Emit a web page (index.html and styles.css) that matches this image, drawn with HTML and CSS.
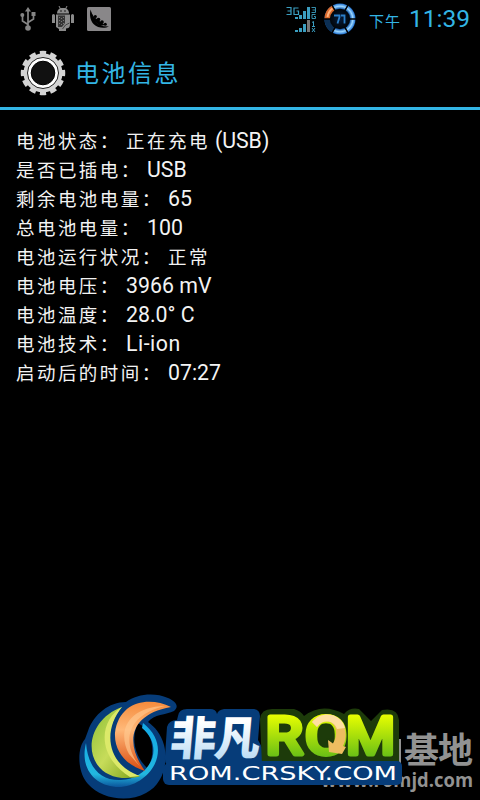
FILE: index.html
```html
<!DOCTYPE html>
<html lang="zh-CN">
<head>
    <meta charset="UTF-8">
    <meta name="viewport" content="width=device-width, initial-scale=1.0">
    <title>电池信息</title>
    <link rel="stylesheet" href="styles.css">
</head>
<body>
    <div class="screen">
        <!-- Status bar -->
        <div class="status-bar">
            <div class="notifications">
                <svg class="usb" width="18" height="24" viewBox="0 0 18 24" fill="none" stroke="#858585" stroke-width="1.7">
                    <path d="M9 20V3M9 17.5L3.5 14V9M9 15.5L14.5 12V7"/>
                    <path d="M9 0L12 4.5H6Z" fill="#858585" stroke="none"/>
                    <circle cx="9" cy="21" r="2.8" fill="#858585" stroke="none"/>
                    <circle cx="3.3" cy="8" r="2" fill="#858585" stroke="none"/>
                    <path d="M12.5 5h4v4h-4z" fill="#858585" stroke="none"/>
                </svg>
                <svg class="robot" width="22" height="26" viewBox="0 0 22 26" fill="#8a8a8a">
                    <path d="M5 7.500C5 4 7 2 11 2S17 4 17 7.500Z"/>
                    <path d="M7 0l1.500 3M15 0l-1.500 3" stroke="#8a8a8a"/>
                    <path d="M0 9.500a1.500 1.500 0 0 1 3 0V17H0ZM19 9.500a1.500 1.500 0 0 1 3 0V17h-3Z"/>
                    <path d="M4 8.500h14v10c0 3-2 4-4 4V25H7v-2L4 21Z"/>
                    <path d="M6 9.500H13V17l-3 4H6Z" fill="#353535"/>
                    <path d="M7.500 11v9M9.500 12v8M11.500 11v7" stroke="#777" stroke-dasharray="1 2"/>
                    <path d="M17.500 17l-4 2-3 4" fill="none" stroke="#333" stroke-width=".8"/>
                    <circle cx="9" cy="5" r=".8" fill="#111"/>
                    <circle cx="13" cy="5" r=".8" fill="#111"/>
                </svg>
                <svg class="pea" width="24" height="24" viewBox="0 0 24 24">
                    <rect width="24" height="24" rx="1.500" fill="#898789"/>
                    <path d="M3.500 2.500C2.500 8 3 13 6.500 17C11 21.500 18 21.500 22 19.500L17 19.300C10 18 6 13 5 7Z"/>
                    <path d="M4 5L7 10L18 18L13 19L6 13Z"/>
                    <circle cx="8.300" cy="9.500" r="1.600"/>
                    <circle cx="11.500" cy="12.500" r="1.800"/>
                    <circle cx="15" cy="15" r="1.800"/>
                    <circle cx="18.300" cy="17.200" r="1.500"/>
                </svg>
            </div>
            <div class="system">
                <svg class="signal" width="30" height="28" viewBox="0 0 30 28" fill="#3b9ec0">
                    <path d="M9 12h3v2H9zM13 10h3v4h-3zM17 6h3v8h-3zM21 2h3v12h-3z"/>
                    <path d="M9 25h3v2H9zM13 23h3v4h-3zM17 19h3v8h-3z"/>
                    <path d="M21 15h3v12h-3z" fill="#777"/>
                    <path d="M.5 2.500H5V9.500H.5M1.500 6H5M12.500 3H8V9.500H12.500V6H10.500" fill="none" stroke="#3b9ec0" stroke-width="1.200"/>
                    <path d="M25.500 2.500H29.500V7.500H25.500M26.500 5H29.500M29.500 9.500H26V13.500H29.500V11.500H28" fill="none" stroke="#3b9ec0" stroke-width=".9"/>
                    <path d="M26 17.500l1.500-1V21M26 21.500h3M26 23l3 4M29 23l-3 4" fill="none" stroke="#3b9ec0"/>
                </svg>
                <svg class="battery" width="32" height="32" viewBox="0 0 32 32">
                    <defs>
                        <radialGradient id="ring">
                            <stop offset=".66" stop-color="#1459ab"/>
                            <stop offset=".82" stop-color="#9bd6ff"/>
                            <stop offset="1" stop-color="#1d6fd0"/>
                        </radialGradient>
                        <radialGradient id="core">
                            <stop offset="0" stop-color="#061b3a"/>
                            <stop offset="1" stop-color="#010509"/>
                        </radialGradient>
                    </defs>
                    <circle cx="16" cy="16" r="15.500" fill="url(#ring)"/>
                    <path d="M16 16L.5 16A15.500 15.500 0 0 1 8.200 2.600Z" fill="#d8682a"/>
                    <path d="M3.500 14A13 13 0 0 1 8.500 5.500" fill="none" stroke="#ffb27d" stroke-width="2"/>
                    <path d="M16 16L.5 16A15.500 15.500 0 0 0 8.200 29.400Z" fill="#0c2f54"/>
                    <path d="M0 16h32M8 2.200l16 27.600M24 2.200L8 29.800" stroke="#000" stroke-width="1.500"/>
                    <circle cx="16" cy="16" r="10.200" fill="url(#core)"/>
                    <path d="M10 12.500h5.500v1.500l-2 6.500M17 12.500h3.500v8" fill="none" stroke="#2b7fc9" stroke-width="1.800"/>
                </svg>
                <span class="ampm">下午</span>
                <span class="clock">11:39</span>
            </div>
        </div>

        <!-- Title bar -->
        <div class="title-bar">
            <svg class="gear" width="46" height="46" viewBox="-23 -23 46 46">
                <circle r="19.500" fill="#d4d4d4"/>
                <circle r="20" fill="none" stroke="#d4d4d4" stroke-width="4.500" pathLength="120" stroke-dasharray="6 4" stroke-dashoffset="3"/>
                <circle r="15.500" fill="#fff" stroke="#222" stroke-width="1"/>
                <circle r="11.800" fill="#111" stroke="#000"/>
            </svg>
            <h1>电池信息</h1>
        </div>

        <!-- Battery details -->
        <ul class="info">
            <li><span class="label">电池状态：</span> <span class="label">正在充电</span><span class="tail">(USB)</span></li>
            <li><span class="label">是否已插电：</span> USB</li>
            <li><span class="label">剩余电池电量：</span> 65</li>
            <li><span class="label">总电池电量：</span> 100</li>
            <li><span class="label">电池运行状况：</span> <span class="label">正常</span></li>
            <li><span class="label">电池电压：</span> 3966 mV</li>
            <li><span class="label">电池温度：</span> 28.0° C</li>
            <li><span class="label">电池技术：</span> <span class="type">Li-ion</span></li>
            <li><span class="label">启动后的时间：</span> 07:27</li>
        </ul>

        <!-- Site logos -->
        <svg class="logos" width="410" height="110" viewBox="70 690 410 110">
            <defs>
                <linearGradient id="green" gradientUnits="userSpaceOnUse" x1="0" y1="714" x2="0" y2="758">
                    <stop offset="0" stop-color="#eaff00"/>
                    <stop offset="1" stop-color="#65bd16"/>
                </linearGradient>
                <linearGradient id="ice" x1="0" y1="0" x2="0" y2="1">
                    <stop offset=".3" stop-color="#fff"/>
                    <stop offset="1" stop-color="#acd5f3"/>
                </linearGradient>
                <linearGradient id="leaf" x1="0" y1="0" x2="1" y2="1">
                    <stop offset="0" stop-color="#8bbf35"/>
                    <stop offset=".5" stop-color="#c7dc5a"/>
                    <stop offset="1" stop-color="#799e16"/>
                </linearGradient>
                <linearGradient id="orange" x1="0" y1="0" x2="0" y2="1">
                    <stop offset="0" stop-color="#f58b3c"/>
                    <stop offset=".4" stop-color="#ffb878"/>
                    <stop offset="1" stop-color="#d94c10"/>
                </linearGradient>
                <linearGradient id="water" x1="0" y1="0" x2="0" y2="1">
                    <stop offset="0" stop-color="#12a8e5"/>
                    <stop offset=".8" stop-color="#22b7df"/>
                    <stop offset="1" stop-color="#0b549b"/>
                </linearGradient>
            </defs>

            <g class="watermark">
                <path d="M396 739h5v24h-5z"/>
                <text x="404" y="762.500" font-size="35" textLength="69">基地</text>
                <text x="321" y="787" font-size="19.500" textLength="152" lengthAdjust="spacingAndGlyphs">www.romjd.com</text>
            </g>

            <!-- Swirl -->
            <path d="M85 739C77 748 77 772 88 784C101 799 128 803 146 793C162 785 169 764 164 745C161 734 155 727 148 722C154 714 166 715 174 711C180 706 175 701 168 698C154 692 137 694 126 702C109 702 94 714 88 731Z" fill="#063c79"/>
            <path d="M138 723C154 731 156 758 147 768C134 755 131 738 138 723Z" fill="#000"/>
            <path d="M86 743C79 771 98 788 121 787C152 784 174 747 143 723L142 728C166 748 149 779 121 780C101 781 88 768 86 743Z" fill="url(#water)"/>
            <path d="M122 707C81 722 82 774 122 778C133 778 140 777 140 776C106 768 101 730 122 707Z" fill="url(#leaf)"/>
            <path d="M122 707C101 719 94 754 130 777L140 776C106 764 103 730 122 707Z" fill="#dce969"/>
            <path d="M171 707C149 696 119 701 115 733C114 753 128 766 145 771C126 745 127 715 171 707Z" fill="url(#orange)"/>
            <path d="M165 706C127 707 117 732 129 754L144 771C121 747 123 716 165 706Z" fill="#ffc990" opacity=".65"/>

            <!-- Wordmark -->
            <path d="M178 716Q179 709 187 709H210Q216 709 217 714Q218 710 224 709H254Q260 710 260 716L258 740L265 753L261 766H171Q164 766 165 756L167 727Q169 720 177 720Z" fill="#063c79"/>
            <path d="M260 719Q261 709 272 709H294Q301 711 304 716Q322 702 344 714Q350 707 359 709L371 721L382 710Q398 707 399 720V765H262Z" fill="#1d3b0a"/>
            <path d="M169 761H397a5 5 0 0 1 5 5v14a5 5 0 0 1-5 5H169a6 6 0 0 1-6-6v-12Z" fill="#063c79"/>
            <text class="name" transform="translate(169 755) skewX(-5)" font-size="46" textLength="90" fill="url(#ice)">非凡</text>
            <g class="rom" fill="url(#green)" stroke="url(#green)">
                <text x="265.500" y="754" textLength="37" lengthAdjust="spacingAndGlyphs">R</text>
                <text x="305" y="754" textLength="42" lengthAdjust="spacingAndGlyphs">O</text>
                <text x="346" y="754" textLength="49" lengthAdjust="spacingAndGlyphs">M</text>
            </g>
            <path d="M312 722C322 710 343 713 345.500 732C346 738 345 742 343 746L346 747L342 754L329 752L328 740L333 743.500C338 735 337 725 330 722C324 720 320 722 317 727Z" fill="#edbd60"/>
            <path d="M312 722C322 710 341 713 345 728L337 729C334 720 323 719 317 727Z" fill="#ffdfa1"/>
            <path d="M319 730C321 723 332 723 334 731V739L326 738L328 747C320 748 317 740 319 730Z" fill="#1d3b0a"/>
            <text class="site" x="169" y="780" textLength="228" lengthAdjust="spacingAndGlyphs">ROM.CRSKY.COM</text>
        </svg>
    </div>
</body>
</html>
```

FILE: styles.css
```css
body {
    margin: 0;
    background-color: #000;
    font-family: Roboto, "Noto Sans CJK SC", sans-serif;
}

.screen {
    position: relative;
    width: 480px;
    height: 800px;
    background-color: #000;
    overflow: hidden;
}

svg {
    display: block;
}

/* Status bar */
.status-bar {
    display: flex;
    justify-content: space-between;
    height: 38px;
    padding: 0 10px 0 19px;
    color: #33b5e5;
}

.notifications,
.system {
    display: flex;
    align-items: center;
}

.notifications {
    gap: 14px;
}

.robot {
    margin-left: 1px;
}

.pea {
    margin-left: -1px;
}

.signal {
    margin-right: 8px;
}

.ampm {
    margin: 3px 8px 0 13px;
    font-size: 15px;
    letter-spacing: 1px;
    font-weight: 400;
}

.clock {
    font-size: 24.500px;
    line-height: 38px;
}

/* Title bar */
.title-bar {
    display: flex;
    align-items: center;
    gap: 9px;
    height: 69px;
    padding-left: 20px;
    border-bottom: 3px solid #33b5e5;
}

h1 {
    margin: 0 0 2px;
    color: #33b5e5;
    font-size: 24px;
    font-weight: 400;
    letter-spacing: 2.500px;
}

/* Battery details */
.info {
    margin: 0;
    padding: 16px;
    list-style: none;
    color: #f3f3f3;
    font-size: 21.300px;
    line-height: 29px;
}

.info li {
    height: 29px;
    white-space: nowrap;
}

.label {
    font-size: 18.500px;
    letter-spacing: 2.450px;
}

.tail {
    margin-left: 5px;
}

.type {
    letter-spacing: 0.500px;
}

/* Site logos */
.logos {
    position: absolute;
    left: 70px;
    bottom: 0;
}

.watermark {
    fill: #929292;
    font-family: "Open Sans", "Noto Sans CJK SC", sans-serif;
    font-weight: 700;
}

.name {
    font-family: "Noto Sans CJK SC", sans-serif;
    font-weight: 900;
}

.rom {
    font-family: Roboto, sans-serif;
    font-size: 51px;
    font-weight: 400;
    stroke-width: 5px;
    stroke-linejoin: round;
}

.site {
    fill: #fff;
    font-family: "DejaVu Sans", sans-serif;
    font-size: 19px;
}
```
